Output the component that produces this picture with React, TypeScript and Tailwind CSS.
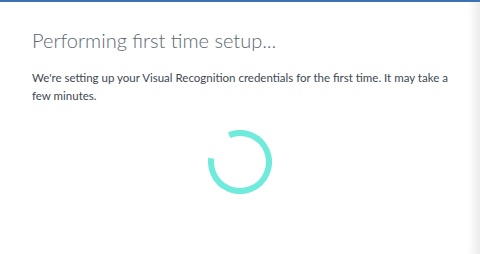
import React from 'react';

const Spinner: React.FC = () => {
  // arc covers ~300deg, gap at upper-left
  const r = 29;
  const c = 2 * Math.PI * r;
  return (
    <svg width="64" height="64" viewBox="0 0 64 64">
      <circle
        cx="32"
        cy="32"
        r={r}
        fill="none"
        stroke="#6feadb"
        strokeWidth="6"
        strokeDasharray={`${(c * 299) / 360} ${c}`}
        transform="rotate(-112 32 32)"
      />
    </svg>
  );
};

const App: React.FC = () => {
  return (
    <div className="w-[480px] h-[254px] flex bg-white overflow-hidden" style={{ fontFamily: 'Lato, "Noto Sans", sans-serif' }}>
      <div className="flex-1 flex flex-col">
        <div className="h-[2px] bg-[#3d70b2]" />
        <div className="pl-8 pr-4 pt-[24px]">
          <h1 className="text-[20px] font-light text-[#5a6872] leading-[28px]">
            Performing first time setup...
          </h1>
          <p className="mt-[15px] text-[11.5px] leading-[18px] text-[#3d4852]">
            We're setting up your Visual Recognition credentials for the first time. It may take a few minutes.
          </p>
          <div className="flex justify-center mt-[25px] ml-[-4px]">
            <Spinner />
          </div>
        </div>
      </div>
      <div className="w-[12px] bg-gradient-to-r from-white to-[#ececec] flex flex-col">
        <div className="h-[2px] bg-[#3d70b2]" />
      </div>
    </div>
  );
};

export default App;
